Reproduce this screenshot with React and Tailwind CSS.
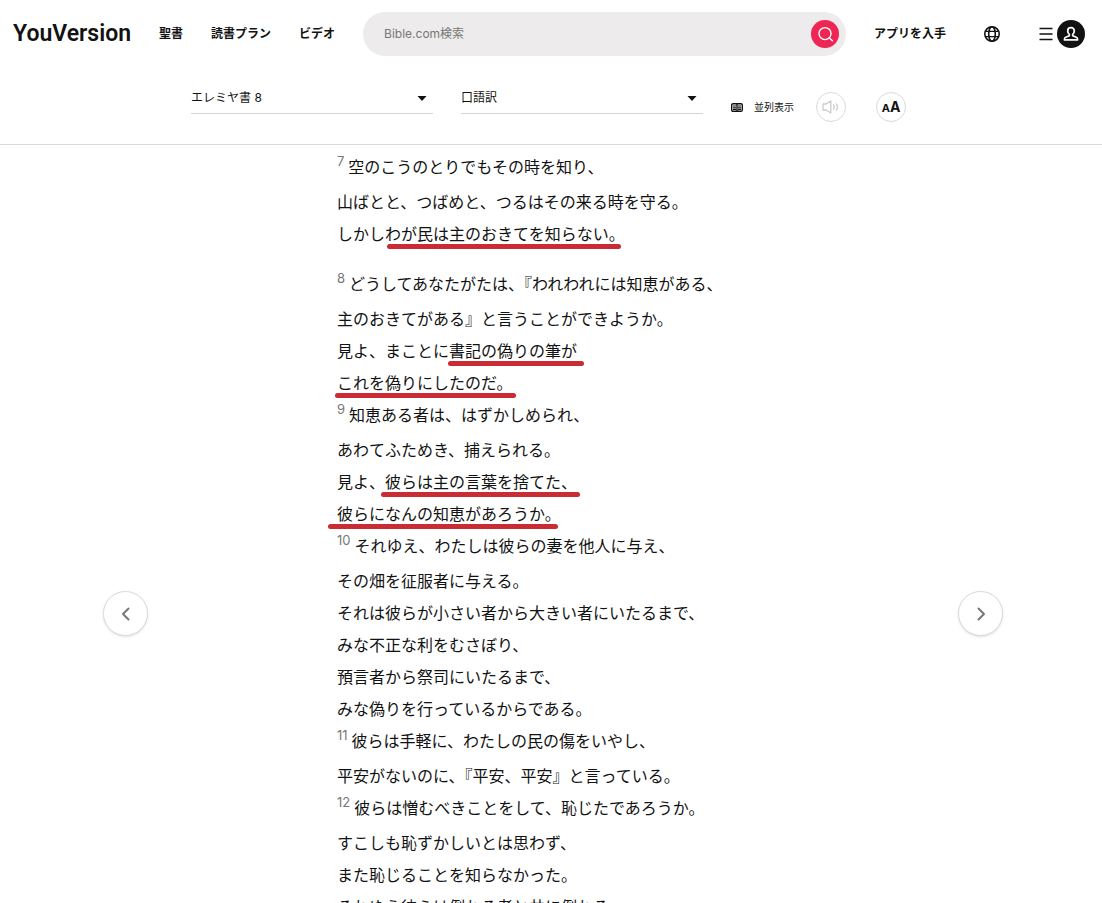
import { useState } from 'react';

const verses = [
  {
    number: 7,
    lines: [
      { text: '空のこうのとりでもその時を知り、' },
      { text: '山ばとと、つばめと、つるはその来る時を守る。' },
      { text: 'しかしわが民は主のおきてを知らない。', mark: 'left-[50px] w-[234px]' },
    ],
  },
  {
    number: 8,
    newParagraph: true,
    lines: [
      { text: 'どうしてあなたがたは、『われわれには知恵がある、' },
      { text: '主のおきてがある』と言うことができようか。' },
      { text: '見よ、まことに書記の偽りの筆が', mark: 'left-[111px] w-[136px]' },
      { text: 'これを偽りにしたのだ。', mark: '-left-[2px] w-[181px]' },
    ],
  },
  {
    number: 9,
    lines: [
      { text: '知恵ある者は、はずかしめられ、' },
      { text: 'あわてふためき、捕えられる。' },
      { text: '見よ、彼らは主の言葉を捨てた、', mark: 'left-[44px] w-[199px]' },
      { text: '彼らになんの知恵があろうか。', mark: '-left-[9px] w-[230px]' },
    ],
  },
  {
    number: 10,
    lines: [
      { text: 'それゆえ、わたしは彼らの妻を他人に与え、' },
      { text: 'その畑を征服者に与える。' },
      { text: 'それは彼らが小さい者から大きい者にいたるまで、' },
      { text: 'みな不正な利をむさぼり、' },
      { text: '預言者から祭司にいたるまで、' },
      { text: 'みな偽りを行っているからである。' },
    ],
  },
  {
    number: 11,
    lines: [
      { text: '彼らは手軽に、わたしの民の傷をいやし、' },
      { text: '平安がないのに、『平安、平安』と言っている。' },
    ],
  },
  {
    number: 12,
    lines: [
      { text: '彼らは憎むべきことをして、恥じたであろうか。' },
      { text: 'すこしも恥ずかしいとは思わず、' },
      { text: 'また恥じることを知らなかった。' },
      { text: 'それゆえ彼らは倒れる者と共に倒れる。' },
    ],
  },
];

function SearchIcon() {
  return (
    <svg viewBox="0 0 18 18" className="size-[18px]" fill="none" stroke="currentColor" strokeWidth="1.4" strokeLinecap="round">
      <circle cx="9" cy="8.6" r="6" />
      <path d="M13.4 13 16.4 15.8" />
    </svg>
  );
}

function GlobeIcon() {
  return (
    <svg viewBox="0 0 18 18" className="size-[18px]" fill="none" stroke="currentColor" strokeWidth="1.6">
      <circle cx="9" cy="9" r="7.2" />
      <ellipse cx="9" cy="9" rx="3.3" ry="7.2" />
      <path d="M2.6 6.4h12.8M2.6 11.6h12.8" strokeWidth="1.4" />
    </svg>
  );
}

function MenuIcon() {
  return (
    <svg viewBox="0 0 14 14" className="size-3.5" stroke="currentColor" strokeWidth="1.6">
      <path d="M.5 1.5h13M.5 7h13M.5 12.5h13" />
    </svg>
  );
}

function PersonIcon() {
  return (
    <svg viewBox="0 0 16 16" className="size-4" fill="none" stroke="currentColor" strokeWidth="1.7" strokeLinejoin="round">
      <path d="M8 1.6c2 0 3.3 1.4 3.3 3.3 0 1.5-.6 2.6-1.6 3.4v1.5l3.6 1.5c.8.3 1.2.9 1.2 1.7v.9H1.5V13c0-.8.4-1.4 1.2-1.7l3.6-1.5V8.3c-1-.8-1.6-1.9-1.6-3.4C4.7 3 6 1.6 8 1.6Z" />
    </svg>
  );
}

function ParallelIcon() {
  return (
    <svg viewBox="0 0 12 9" className="h-[9px] w-3" fill="none" stroke="currentColor">
      <rect x=".7" y=".7" width="10.6" height="7.6" rx="1.3" strokeWidth="1.4" />
      <path d="M6 1v7" strokeWidth="1.4" />
      <path d="M2 3h3M2 4.7h3M2 6.4h3M7 3h3M7 4.7h3M7 6.4h3" strokeWidth="1.1" />
    </svg>
  );
}

function SpeakerIcon() {
  return (
    <svg viewBox="0 0 18 14" className="h-3.5 w-[18px]" fill="none" stroke="currentColor" strokeWidth="1.3" strokeLinejoin="round" strokeLinecap="round">
      <path d="M1 4h3L8.8 1v12L4 10H1Z" />
      <path d="M11.5 5c.9 1.2.9 2.8 0 4M14.2 3.8c1.7 2 1.7 4.4 0 6.4" />
    </svg>
  );
}

function Chevron({ d }) {
  return (
    <svg viewBox="0 0 12 16" className="h-4 w-3" fill="none" stroke="currentColor" strokeWidth="2" strokeLinecap="round" strokeLinejoin="round">
      <path d={d} />
    </svg>
  );
}

function Picker({ label, value, onChange, options }) {
  return (
    <div className="relative min-w-0 flex-1">
      <select
        aria-label={label}
        value={value}
        onChange={(e) => onChange(e.target.value)}
        className="h-8 w-full appearance-none rounded-none border-b border-[#d5d5d5] bg-white text-xs text-[#121212] outline-none"
      >
        {options.map((option) => (
          <option key={option}>{option}</option>
        ))}
      </select>
      <svg viewBox="0 0 10 5" className="pointer-events-none absolute right-1.5 top-3.5 h-[5px] w-2.5" fill="currentColor">
        <path d="M.5 0h9L5 5Z" />
      </svg>
    </div>
  );
}

function Line({ line, number }) {
  return (
    <p className={`relative whitespace-nowrap leading-8 ${number ? 'h-[35px]' : 'h-8'}`}>
      {number && <sup className="top-0 mr-1 align-[7px] text-[13px] leading-none text-[#777777]">{number}</sup>}
      {line.text}
      {line.mark && <span className={`absolute top-[26px] h-[5px] rounded-full bg-[#c92c32] ${line.mark}`}></span>}
    </p>
  );
}

export default function App() {
  const [book, setBook] = useState('エレミヤ書 8');
  const [version, setVersion] = useState('口語訳');
  const [query, setQuery] = useState('');

  return (
    <div lang="ja" className="flex h-screen flex-col overflow-hidden bg-white font-['Inter','Noto_Sans_CJK_JP',sans-serif] text-[#121212]">
      <header className="shrink-0 border-b border-[#dadada]">
        {/* Top navigation */}
        <div className="flex h-[68px] items-center pl-[13px] pr-[17px]">
          <a href="/" className="font-['Roboto',sans-serif] text-[23px] font-semibold">YouVersion</a>
          <nav className="ml-7 flex shrink-0 gap-7 text-xs font-bold">
            <a href="/bible">聖書</a>
            <a href="/reading-plans">読書プラン</a>
            <a href="/videos">ビデオ</a>
          </nav>

          <form className="ml-7 flex h-11 flex-1 items-center rounded-full bg-[#edebeb] pl-[21px] pr-[7px]" onSubmit={(e) => e.preventDefault()}>
            <input
              type="text"
              aria-label="Bible.com検索"
              placeholder="Bible.com検索"
              value={query}
              onChange={(e) => setQuery(e.target.value)}
              className="min-w-0 flex-1 bg-transparent text-xs outline-none placeholder:text-[#777777]"
            />
            <button type="submit" aria-label="検索" className="flex size-7 items-center justify-center rounded-full bg-[#ee2653] text-white">
              <SearchIcon />
            </button>
          </form>

          <a href="/app" className="ml-7 shrink-0 text-xs font-bold">アプリを入手</a>
          <button type="button" aria-label="言語" className="ml-[37px]">
            <GlobeIcon />
          </button>
          <button type="button" aria-label="メニュー" className="ml-[38px] flex items-center gap-1">
            <MenuIcon />
            <span className="flex size-7 items-center justify-center rounded-full bg-[#121212] text-white">
              <PersonIcon />
            </span>
          </button>
        </div>

        {/* Reader toolbar */}
        <div className="mx-auto flex max-w-[720px] items-start pb-[22px] pt-3.5">
          <div className="flex min-w-0 flex-1 gap-7">
            <Picker label="書" value={book} onChange={setBook} options={['エレミヤ書 8', 'エレミヤ書 9']} />
            <Picker label="訳" value={version} onChange={setVersion} options={['口語訳', '新共同訳']} />
          </div>
          <div className="flex h-10 items-end pl-7 pr-[5px]">
            <button type="button" className="flex h-[30px] items-center gap-[11px] text-[10px]">
              <ParallelIcon />
              並列表示
            </button>
            <button type="button" aria-label="音声" className="ml-[22px] flex size-[30px] items-center justify-center rounded-full border border-[#dadada] text-[#cccccc]">
              <SpeakerIcon />
            </button>
            <button type="button" aria-label="文字サイズ" className="ml-[30px] flex size-[30px] items-center justify-center rounded-full border border-[#dadada]">
              <span className="flex items-baseline font-bold leading-none">
                <span className="text-[11px]">A</span>
                <span className="text-sm">A</span>
              </span>
            </button>
          </div>
        </div>
      </header>

      {/* Chapter text */}
      <main className="min-h-0 flex-1 overflow-hidden px-4 pt-1.5">
        <div className="mx-auto max-w-[428px] text-base">
          {verses.map((verse) => (
            <section key={verse.number} className={verse.newParagraph ? 'mt-[18px]' : ''}>
              {verse.lines.map((line, i) => (
                <Line key={line.text} line={line} number={i === 0 ? verse.number : null} />
              ))}
            </section>
          ))}
        </div>
      </main>

      {/* Chapter arrows */}
      <div className="pointer-events-none fixed left-1 right-0 bottom-[267px] mx-auto flex max-w-[900px] justify-between text-[#777777]">
        <button type="button" aria-label="前の章" className="pointer-events-auto flex size-[45px] items-center justify-center rounded-full border border-[#dadada] bg-white shadow-sm">
          <Chevron d="M8.5 2.5 3 8l5.5 5.5" />
        </button>
        <button type="button" aria-label="次の章" className="pointer-events-auto flex size-[45px] items-center justify-center rounded-full border border-[#dadada] bg-white shadow-sm">
          <Chevron d="M3.5 2.5 9 8l-5.5 5.5" />
        </button>
      </div>
    </div>
  );
}
